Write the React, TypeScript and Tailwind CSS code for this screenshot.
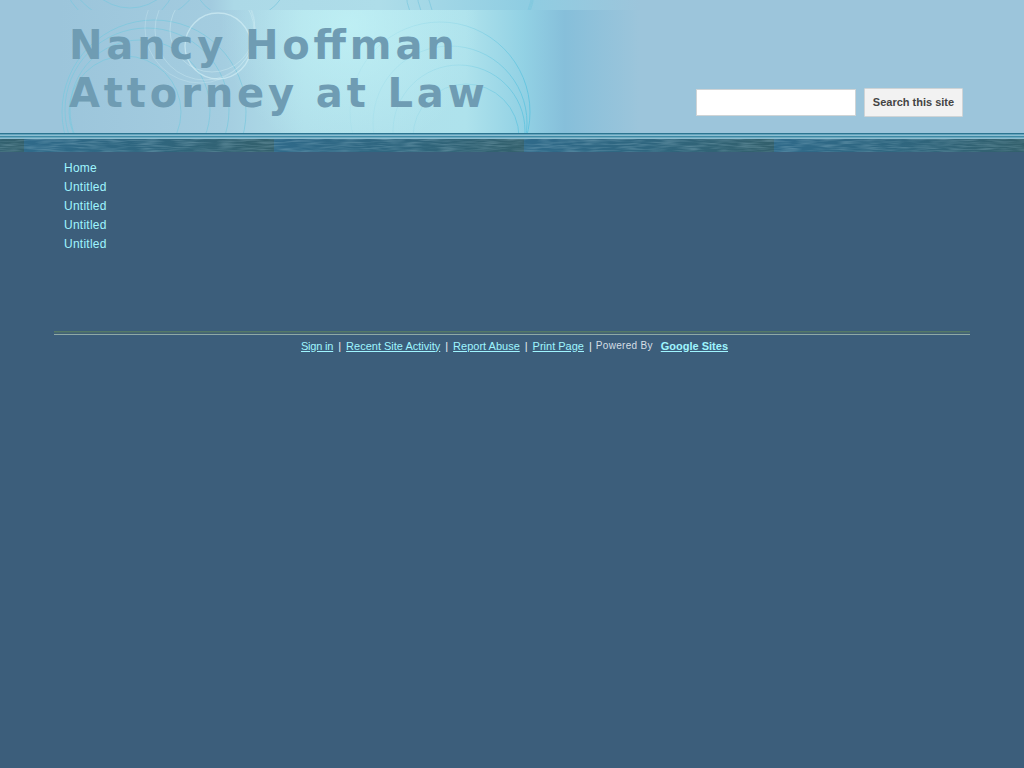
const navItems = ["Home", "Untitled", "Untitled", "Untitled", "Untitled"]

function HeaderArt() {
  return (
    <svg className="absolute inset-0 h-[133px] w-full" viewBox="0 0 1024 133" preserveAspectRatio="none">
      <defs>
        <linearGradient id="strip" x1="0" x2="1" y1="0" y2="0">
          <stop offset="0" stopColor="#9cc5db" />
          <stop offset="0.26" stopColor="#a2cbdf" />
          <stop offset="0.3" stopColor="#acd9e7" />
          <stop offset="0.55" stopColor="#aedde9" />
          <stop offset="0.8" stopColor="#8fcde2" />
          <stop offset="1" stopColor="#9cc5db" />
        </linearGradient>
        <linearGradient id="panel" x1="0" x2="1" y1="0" y2="0">
          <stop offset="0" stopColor="#9cc5db" />
          <stop offset="0.28" stopColor="#a4cde0" />
          <stop offset="0.42" stopColor="#b0dfea" />
          <stop offset="0.7" stopColor="#aee2ec" />
          <stop offset="0.8" stopColor="#92d1e4" />
          <stop offset="0.87" stopColor="#86bfda" />
          <stop offset="1" stopColor="#9cc5db" />
        </linearGradient>
        <radialGradient id="glow" gradientUnits="userSpaceOnUse" cx="350" cy="25" r="130">
          <stop offset="0" stopColor="#c4f5f8" stopOpacity="0.7" />
          <stop offset="1" stopColor="#c4f5f8" stopOpacity="0" />
        </radialGradient>
        <linearGradient id="fadeArc" gradientUnits="userSpaceOnUse" x1="350" x2="530" y1="0" y2="0">
          <stop offset="0" stopColor="#7fd0e4" stopOpacity="0.12" />
          <stop offset="0.6" stopColor="#7fd0e4" stopOpacity="0.35" />
          <stop offset="1" stopColor="#62c4df" stopOpacity="0.95" />
        </linearGradient>
        <clipPath id="lower"><rect x="0" y="10" width="1024" height="123" /></clipPath>
        <clipPath id="upper"><rect x="0" y="0" width="1024" height="10" /></clipPath>
      </defs>
      <rect x="60" y="0" width="580" height="10" fill="url(#strip)" />
      <rect x="60" y="10" width="580" height="123" fill="url(#panel)" />
      <rect x="220" y="10" width="260" height="123" fill="url(#glow)" />
      <g fill="none" stroke="#7cc8de" strokeOpacity="0.75" clipPath="url(#lower)">
        <circle cx="154" cy="112" r="92" />
        <circle cx="147" cy="110" r="82" />
        <circle cx="140" cy="110" r="70" />
        <circle cx="125" cy="112" r="56" />
      </g>
      <g fill="none" stroke="#d4f0f6" clipPath="url(#lower)">
        <circle cx="218" cy="46" r="33" strokeWidth="1.3" strokeOpacity="0.65" />
        <circle cx="212" cy="30" r="42" strokeOpacity="0.4" />
        <circle cx="205" cy="30" r="50" strokeOpacity="0.35" />
        <circle cx="200" cy="28" r="55" strokeOpacity="0.3" />
      </g>
      <g fill="none" stroke="url(#fadeArc)" clipPath="url(#lower)">
        <circle cx="440" cy="112" r="90" />
        <circle cx="450" cy="123" r="77" />
        <circle cx="459" cy="131" r="66" />
        <circle cx="466" cy="137" r="53" />
      </g>
      <g fill="none" stroke="#7cc8de" strokeOpacity="0.7" clipPath="url(#upper)">
        <circle cx="120" cy="-30" r="58" />
        <circle cx="135" cy="-50" r="74" />
        <circle cx="130" cy="-40" r="48" />
        <circle cx="240" cy="-30" r="50" />
        <circle cx="475" cy="-10" r="58" />
        <circle cx="480" cy="-10" r="52" />
        <circle cx="470" cy="-10" r="64" />
      </g>
    </svg>
  )
}

function WaterBand() {
  return (
    <svg className="block h-[13px] w-full" viewBox="0 0 1024 13" preserveAspectRatio="none">
      <defs>
        <linearGradient id="tile" x1="0" x2="1" y1="0" y2="0">
          <stop offset="0" stopColor="#2f6a8a" />
          <stop offset="0.5" stopColor="#2f667f" />
          <stop offset="1" stopColor="#33606c" />
        </linearGradient>
        <pattern id="tilePat" x="24" y="0" width="250" height="13" patternUnits="userSpaceOnUse">
          <rect width="250" height="13" fill="url(#tile)" />
        </pattern>
        <filter id="ripple" x="0" y="0" width="100%" height="100%">
          <feTurbulence type="fractalNoise" baseFrequency="0.05 0.6" numOctaves="2" seed="4" />
          <feColorMatrix values="0 0 0 0 0.4  0 0 0 0 0.62  0 0 0 0 0.72  0 0 0 1.6 -0.6" />
        </filter>
      </defs>
      <rect width="1024" height="13" fill="url(#tilePat)" />
      <rect width="1024" height="13" filter="url(#ripple)" opacity="0.4" />
    </svg>
  )
}

export default function App() {
  return (
    <div className="min-h-[768px] bg-[#3c5e7b] font-['Liberation_Sans',Arial,sans-serif]">
      <header className="relative h-[133px] bg-[#9cc5db]">
        <HeaderArt />
        <div className="relative flex h-full items-start justify-between pl-[69px] pr-[61px]">
          <h1 className="mt-[21px] font-['DejaVu_Sans',sans-serif] text-[40px] font-bold leading-[48px] tracking-[3.87px] text-[#6f9cb3] [font-feature-settings:'liga'_1]">
            Nancy Hoffman
            <br />
            Attorney at Law
          </h1>
          <form className="mt-[88px] flex items-start gap-2">
            <input type="text" className="mt-[1px] h-[27px] w-[160px] border border-[#cfd4d6] bg-white" />
            <button type="button" className="h-[29px] w-[99px] rounded-[1px] border border-[#cfd4d6] bg-[#f2f2f2] text-[11px] font-bold text-[#444]">
              Search this site
            </button>
          </form>
        </div>
      </header>

      <div className="flex h-[6px] flex-col">
        <div className="h-[1px] bg-[#2c7490]" />
        <div className="h-[1px] bg-[#62a4bd]" />
        <div className="h-[1px] bg-[#8dbdd0]" />
        <div className="h-[1px] bg-[#3f8aa5]" />
        <div className="h-[1px] bg-[#6aa9c0]" />
        <div className="h-[1px] bg-[#8dbdd0]" />
      </div>
      <WaterBand />

      <nav className="flex h-[179px] flex-col pl-[64px] pt-[7px]">
        {navItems.map((item, i) => (
          <a key={i} href="#" className="block text-[12px] leading-[19px] tracking-[0.25px] text-[#9ff5ff]">
            {item}
          </a>
        ))}
      </nav>

      <div className="mx-[54px] flex h-[4px] flex-col">
        <div className="h-[1px] bg-[#547a68]" />
        <div className="h-[1px] bg-[#4a6a70]" />
        <div className="h-[1px] bg-[#416276]" />
        <div className="h-[1px] bg-[#8fa9a6]" />
      </div>

      <footer className="flex items-center justify-center pl-[5px] pt-[3px] text-[11px] leading-[14px]">
        <a href="#" className="tracking-[-0.2px] text-[#9ff5ff] underline">Sign in</a>
        <span className="mx-[5px] text-[#e4edf2]">|</span>
        <a href="#" className="text-[#9ff5ff] underline">Recent Site Activity</a>
        <span className="mx-[5px] text-[#e4edf2]">|</span>
        <a href="#" className="text-[#9ff5ff] underline">Report Abuse</a>
        <span className="mx-[5px] text-[#e4edf2]">|</span>
        <a href="#" className="text-[#9ff5ff] underline">Print Page</a>
        <span className="ml-[5px] mr-[4px] text-[#e4edf2]">|</span>
        <span className="mt-[1px] text-[10px] tracking-[0.3px] text-[#d5dfe6]">Powered By</span>
        <a href="#" className="ml-[8px] font-bold text-[#9ff5ff] underline">Google Sites</a>
      </footer>
    </div>
  )
}
